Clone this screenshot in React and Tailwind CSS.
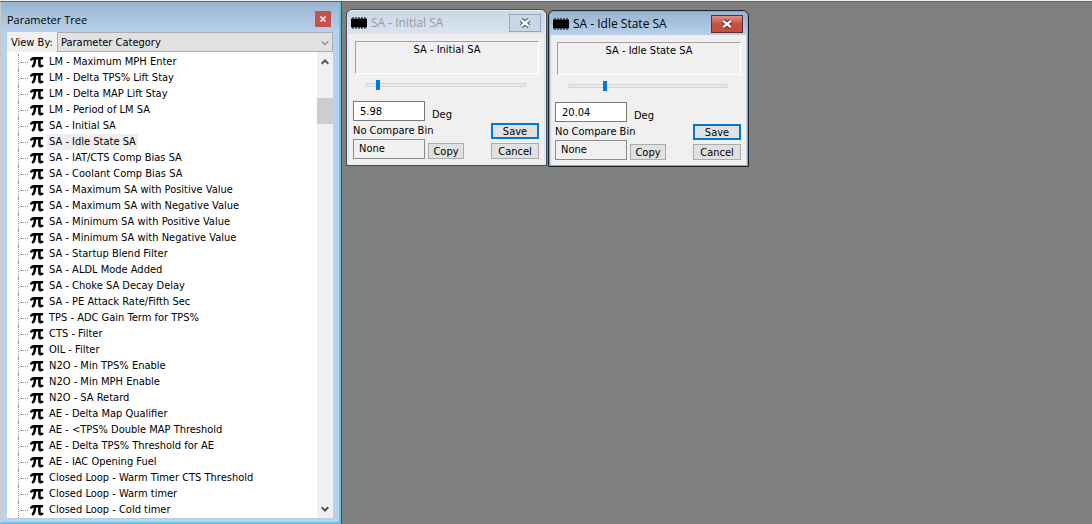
import { useState } from "react";

const parameters = [
  "LM - Maximum MPH Enter",
  "LM - Delta TPS% Lift Stay",
  "LM - Delta MAP Lift Stay",
  "LM - Period of LM SA",
  "SA - Initial SA",
  "SA - Idle State SA",
  "SA - IAT/CTS Comp Bias SA",
  "SA - Coolant Comp Bias SA",
  "SA - Maximum SA with Positive Value",
  "SA - Maximum SA with Negative Value",
  "SA - Minimum SA with Positive Value",
  "SA - Minimum SA with Negative Value",
  "SA - Startup Blend Filter",
  "SA - ALDL Mode Added",
  "SA - Choke SA Decay Delay",
  "SA - PE Attack Rate/Fifth Sec",
  "TPS - ADC Gain Term for TPS%",
  "CTS - Filter",
  "OIL - Filter",
  "N2O - Min TPS% Enable",
  "N2O - Min MPH Enable",
  "N2O - SA Retard",
  "AE - Delta Map Qualifier",
  "AE - <TPS% Double MAP Threshold",
  "AE - Delta TPS% Threshold for AE",
  "AE - IAC Opening Fuel",
  "Closed Loop - Warm Timer CTS Threshold",
  "Closed Loop - Warm timer",
  "Closed Loop - Cold timer",
];

function PiIcon() {
  return (
    <svg viewBox="0 0 14 12" className="h-3 w-3.5 shrink-0" fill="none" stroke="#000" aria-hidden="true">
      <path d="M1 4.6C1.4 2.8 2.4 2.2 4 2.2H13" strokeWidth="2.4" />
      <path d="M5 2.5C5 6 4.6 8.5 3 10.2" strokeWidth="2.6" strokeLinecap="round" />
      <path d="M9.4 2.5V8.4C9.4 10.6 11.4 10.8 12.8 9" strokeWidth="2.6" />
    </svg>
  );
}

function ChipIcon() {
  return (
    <svg viewBox="0 0 16 12" className="h-3 w-4 shrink-0" aria-hidden="true">
      <path d="M2 0V12M5 0V12M8 0V12M11 0V12M14 0V12" stroke="#222" strokeWidth="1.2" />
      <rect x="0" y="1.6" width="16" height="8.8" fill="#000" />
    </svg>
  );
}

function Chevron({ up, className }) {
  return (
    <svg viewBox="0 0 8 6" className={className} fill="none" stroke="currentColor" aria-hidden="true">
      <path d={up ? "M0.7 4.7L4 1.5L7.3 4.7" : "M0.7 1.3L4 4.5L7.3 1.3"} />
    </svg>
  );
}

function ParameterTree() {
  return (
    <aside className="flex w-[342px] shrink-0 flex-col border-t border-r border-t-[#5c6670] border-r-[#35515c] bg-[#b9d1ea]">
      <div className="flex min-h-0 flex-1 flex-col border-r-2 border-b-2 border-l border-r-[#5fc6e4] border-b-[#5fc6e4] border-l-[#c9c9c9] pr-1.5 pb-1 pl-1.5">
        <header className="-mr-1.5 -ml-1.5 flex h-[30px] shrink-0 items-center justify-between bg-linear-to-b from-[#99b4d1] to-[#b9d1ea] pt-1 pr-2 pl-1.5">
          <h1 className="pt-0.5 font-['Open_Sans',sans-serif] leading-4 text-black">Parameter Tree</h1>
          <button type="button" aria-label="Close" className="flex size-4 items-center justify-center bg-[#c75050] text-white">
            <svg viewBox="0 0 6 6" className="size-1.5" stroke="currentColor" strokeWidth="1.5" aria-hidden="true">
              <path d="M0.5 0.5L5.5 5.5M5.5 0.5L0.5 5.5" />
            </svg>
          </button>
        </header>
        <div className="flex h-5 shrink-0 bg-[#f0f0f0]">
          <label htmlFor="view-by" className="w-[50px] shrink-0 pt-px pl-1 leading-5 whitespace-nowrap">
            View By:
          </label>
          <div className="relative flex-1">
            <select id="view-by" className="block h-5 w-full appearance-none border border-[#adadad] bg-[#e1e1e1] pt-0.5 pl-[3px] leading-4 text-black">
              <option>Parameter Category</option>
            </select>
            <Chevron className="pointer-events-none absolute top-2 right-1 h-1.5 w-2 text-[#444]" />
          </div>
        </div>
        <div className="flex min-h-0 flex-1 bg-white">
          <ul className="min-w-0 flex-1 overflow-hidden pt-0.5 pl-[11px]">
            {parameters.map((name) => (
              <li key={name} className="flex h-4 items-center border-l border-dotted border-[#8a8a8a] pl-px">
                <span className="mr-0.5 w-2 border-t border-dotted border-[#8a8a8a]" />
                <PiIcon />
                <span className={name === "SA - Idle State SA" ? "ml-[3px] bg-[#f0f0f0] px-0.5 leading-4" : "ml-[3px] px-0.5 leading-4"}>
                  {name}
                </span>
              </li>
            ))}
          </ul>
          <div className="flex w-4 shrink-0 flex-col bg-[#f0f0f0] text-[#555]">
            <button type="button" aria-label="Scroll up" className="flex h-5 items-center justify-center">
              <Chevron up className="h-1.5 w-2 stroke-2" />
            </button>
            <div className="mt-[26px] h-[26px] bg-[#cdcdcd]" />
            <button type="button" aria-label="Scroll down" className="mt-auto flex h-[18px] items-center justify-center">
              <Chevron className="h-1.5 w-2 stroke-2" />
            </button>
          </div>
        </div>
      </div>
    </aside>
  );
}

const frames = {
  active: {
    place: "left-[206px] top-2",
    outer: "border-[#1c2226]",
    inner: "border-[#37c8ea] bg-[#b9d1ea]",
    title: "bg-linear-to-b from-[#98b3d1] to-[#b9d1ea] text-black",
    close: "border-[#6b2a2a] bg-linear-to-b from-[#dd8f85] via-[#c8503f] to-[#c0503f]",
    stroke: "#5d3034",
  },
  inactive: {
    place: "left-1 top-[7px]",
    outer: "border-[#4c4c4c]",
    inner: "border-[#e4ecf5] bg-[#d7e4f2]",
    title: "bg-linear-to-b from-[#cad7e5] to-[#d9e5f1] text-[#9a9a9a]",
    close: "border-[#98a8b8] bg-[#c8d6e5]",
    stroke: "#4c5562",
  },
};

function ParameterWindow({ id, title, value, position, state }) {
  const [slider, setSlider] = useState(position);
  const f = frames[state];
  const button = "flex h-4 items-center justify-center border bg-[#e1e1e1] pt-px leading-4";
  return (
    <section className={`absolute w-[201px] rounded-t-md border ${f.outer} ${f.place}`}>
      <div className={`rounded-t-[5px] border ${f.inner}`}>
        <header className={`flex h-[23px] items-center rounded-t-[4px] pr-1 pl-[3px] ${f.title}`}>
          <ChipIcon />
          <h2 className="ml-1 font-['Open_Sans',sans-serif] text-[12px] leading-4">{title}</h2>
          <button type="button" aria-label={`Close ${title}`} className={`ml-auto flex h-[18px] w-8 items-center justify-center border ${f.close}`}>
            <svg viewBox="0 0 12 10" className="h-2.5 w-3" fill="none" aria-hidden="true">
              <path d="M2.2 1.8L9.8 8.2M9.8 1.8L2.2 8.2" stroke={f.stroke} strokeWidth="4.4" />
              <path d="M2.2 1.8L9.8 8.2M9.8 1.8L2.2 8.2" stroke="#fff" strokeWidth="2.4" />
            </svg>
          </button>
        </header>
        <div className="mx-px bg-[#f0f0f0] pt-[7px] pr-[5px] pb-[5px] pl-1.5">
          <div className="h-[33px] border border-t-[#a0a0a0] border-r-white border-b-white border-l-[#a0a0a0] text-center leading-4">{title}</div>
          <input
            type="range"
            aria-label={title}
            value={slider}
            onChange={(e) => setSlider(Number(e.target.value))}
            className="mt-1.5 ml-[11px] block h-2.5 w-40 appearance-none bg-transparent [&::-webkit-slider-runnable-track]:h-1 [&::-webkit-slider-runnable-track]:border [&::-webkit-slider-runnable-track]:border-[#d6d6d6] [&::-webkit-slider-runnable-track]:bg-[#e7eaea] [&::-webkit-slider-thumb]:-mt-1 [&::-webkit-slider-thumb]:h-2.5 [&::-webkit-slider-thumb]:w-1 [&::-webkit-slider-thumb]:appearance-none [&::-webkit-slider-thumb]:bg-[#0078d7]"
          />
          <div className="mt-[11px] flex items-end justify-between">
            <div className="-ml-0.5">
              <div className="flex items-end">
                <input id={id} defaultValue={value} className="h-5 w-[72px] border border-[#7a7a7a] bg-white pt-px pl-1.5 leading-4" />
                <label htmlFor={id} className="ml-[7px] h-3.5 leading-4">Deg</label>
              </div>
              <p className="mt-0.5 leading-4">No Compare Bin</p>
              <div className="flex items-end">
                <output className="h-5 w-[72px] border border-[#8a8a8a] bg-[#f0f0f0] pt-px pl-[5px] leading-4">None</output>
                <button type="button" className={`ml-[3px] w-9 border-[#adadad] ${button}`}>Copy</button>
              </div>
            </div>
            <div className="flex w-12 flex-col gap-1">
              <button type="button" className="flex h-4 items-center justify-center border-2 border-[#0078d7] bg-[#e1e1e1] pt-px leading-3">Save</button>
              <button type="button" className={`border-[#adadad] ${button}`}>Cancel</button>
            </div>
          </div>
        </div>
      </div>
    </section>
  );
}

export default function App() {
  return (
    <div className="flex h-screen flex-col overflow-hidden border-t border-[#f0f0f0] bg-[#808080] font-['DejaVu_Sans_Condensed','DejaVu_Sans',sans-serif] text-[11px] text-black">
      <div className="flex min-h-0 flex-1">
        <ParameterTree />
        <main className="relative min-w-0 flex-1 border-t border-[#696969]">
          <ParameterWindow id="initial-sa" title="SA - Initial SA" value="5.98" position={6} state="inactive" />
          <ParameterWindow id="idle-sa" title="SA - Idle State SA" value="20.04" position={22} state="active" />
        </main>
      </div>
    </div>
  );
}
